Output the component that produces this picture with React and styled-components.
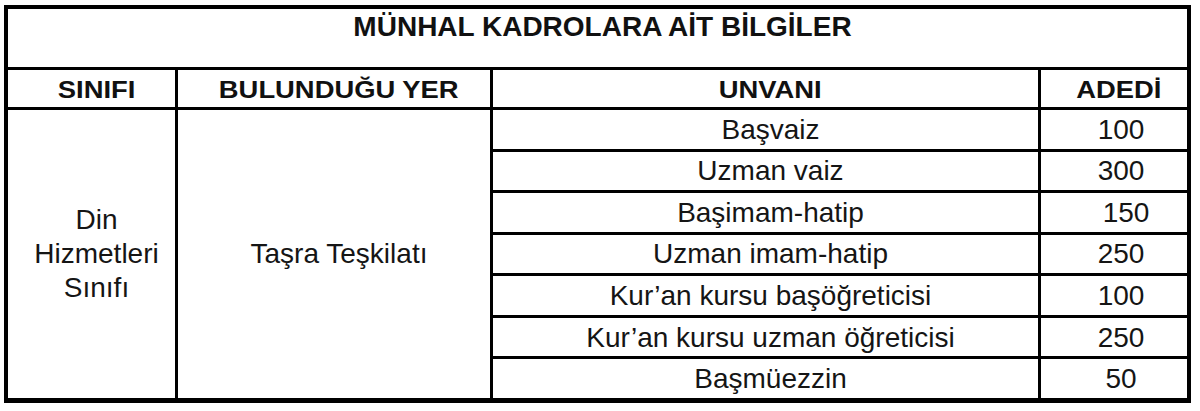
import React from 'react'
import styled, { createGlobalStyle } from 'styled-components'

const GlobalStyle = createGlobalStyle`
  html, body {
    margin: 0;
    padding: 0;
    background: #fff;
  }
  body {
    padding: 5px 0 0 4px;
    font-family: "Liberation Sans", Arial, sans-serif;
    color: #151515;
  }
`

const Sheet = styled.div`
  display: grid;
  grid-template-columns: 167px 312px 545px 146px;
  grid-template-rows: 58px 37px repeat(7, 1fr);
  gap: 3px;
  width: 1187px;
  height: 398px;
  box-sizing: border-box;
  background: #000;
  border: 4px solid #000;
  border-bottom-width: 5px;
`

const Cell = styled.div`
  display: flex;
  align-items: center;
  justify-content: center;
  text-align: center;
  background: #fff;
  padding-left: 10px;
  font-size: 28px;
  line-height: 31px;
  white-space: nowrap;
`

const TitleCell = styled(Cell)`
  grid-column: 1 / -1;
  align-items: flex-start;
  padding-top: 2px;
  font-weight: bold;
  font-size: 28px;
  color: #111;
`

const HeadCell = styled(Cell)`
  font-weight: bold;
  font-size: 23px;
  color: #111;
`

const HeadText = styled.span`
  display: inline-block;
  transform: scaleX(1.19);
  padding-top: 3px;
`

const SpanCell = styled(Cell)`
  grid-row: span 7;
  line-height: 34px;
  white-space: normal;
`

const CountCell = styled(Cell)`
  padding-left: ${p => p.$shift}px;
`

const rows = [
  ['Başvaiz', '100', 14],
  ['Uzman vaiz', '300', 14],
  ['Başimam-hatip', '150', 24],
  ['Uzman imam-hatip', '250', 14],
  ['Kur’an kursu başöğreticisi', '100', 14],
  ['Kur’an kursu uzman öğreticisi', '250', 14],
  ['Başmüezzin', '50', 14],
]

export default function App() {
  return (
    <>
      <GlobalStyle />
      <Sheet>
        <TitleCell>MÜNHAL KADROLARA AİT BİLGİLER</TitleCell>
        <HeadCell><HeadText>SINIFI</HeadText></HeadCell>
        <HeadCell><HeadText>BULUNDUĞU YER</HeadText></HeadCell>
        <HeadCell><HeadText>UNVANI</HeadText></HeadCell>
        <HeadCell><HeadText>ADEDİ</HeadText></HeadCell>
        <SpanCell>Din<br />Hizmetleri<br />Sınıfı</SpanCell>
        <SpanCell>Taşra Teşkilatı</SpanCell>
        {rows.map(([title, count, shift]) => (
          <React.Fragment key={title}>
            <Cell>{title}</Cell>
            <CountCell $shift={shift}>{count}</CountCell>
          </React.Fragment>
        ))}
      </Sheet>
    </>
  )
}
